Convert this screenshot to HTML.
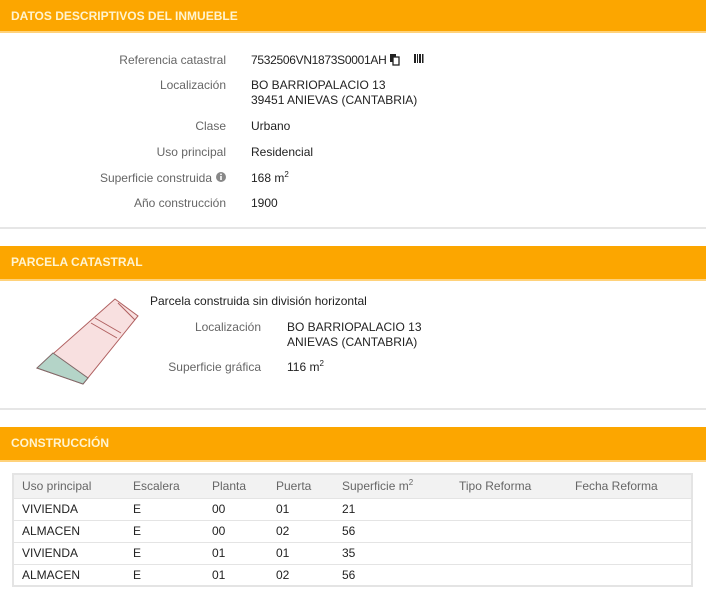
<!DOCTYPE html>
<html><head><meta charset="utf-8"><style>
*{margin:0;padding:0;box-sizing:border-box}
body{width:706px;height:600px;background:#fff;font-family:"Liberation Sans",sans-serif;font-size:12px;color:#222;position:relative;overflow:hidden}
.h{position:absolute;left:0;width:706px;background:#fca600;color:#fff4d0;font-weight:bold;font-size:12px;padding-left:11px;border-bottom:2px solid #ffd27a}
.a{position:absolute;white-space:nowrap}
.l{color:#666;text-align:right;width:226px;left:0}
.line{position:absolute;left:0;width:706px;height:2px;background:#e6e6e6}
table{position:absolute;left:12px;top:473px;width:681px;border-collapse:collapse;border:2px solid #e4e4e4}
td{height:22px;padding-left:8px;border-bottom:1px solid #e4e4e4;font-size:12px;color:#222}
tr.th td{background:#f2f2f2;color:#666;height:24px}
sup{font-size:8px;vertical-align:5px;line-height:0}
</style></head><body>
<div class="h" style="top:0;height:33px;line-height:32px">DATOS DESCRIPTIVOS DEL INMUEBLE</div>
<div class="a l" style="top:53px">Referencia catastral</div>
<div class="a" style="left:251px;top:53px;letter-spacing:-0.3px">7532506VN1873S0001AH</div>
<svg class="a" style="left:389px;top:53px" width="12" height="14"><rect x="1" y="1" width="6" height="8" fill="#222"/><rect x="4" y="4" width="6" height="8" fill="#fff" stroke="#222" stroke-width="1.3"/></svg>
<svg class="a" style="left:413px;top:53px" width="12" height="14"><g fill="#222"><rect x="1" y="1" width="2" height="9"/><rect x="4" y="1" width="1" height="9"/><rect x="6" y="1" width="2" height="9"/><rect x="9" y="1" width="1.5" height="9"/></g></svg>
<div class="a l" style="top:78px">Localización</div>
<div class="a" style="left:251px;top:78px;line-height:15px">BO BARRIOPALACIO 13<br>39451 ANIEVAS (CANTABRIA)</div>
<div class="a l" style="top:119px">Clase</div><div class="a" style="left:251px;top:119px">Urbano</div>
<div class="a l" style="top:145px">Uso principal</div><div class="a" style="left:251px;top:145px">Residencial</div>
<div class="a l" style="top:171px;width:212px">Superficie construida</div>
<svg class="a" style="left:215px;top:171px" width="12" height="14"><circle cx="6" cy="6" r="5" fill="#888"/><rect x="5.2" y="5" width="1.6" height="4" fill="#fff"/><rect x="5.2" y="2.6" width="1.6" height="1.5" fill="#fff"/></svg>
<div class="a" style="left:251px;top:171px">168 m<sup>2</sup></div>
<div class="a l" style="top:196px">Año construcción</div><div class="a" style="left:251px;top:196px">1900</div>
<div class="line" style="top:227px"></div>
<div class="h" style="top:246px;height:35px;line-height:33px">PARCELA CATASTRAL</div>
<svg class="a" style="left:0;top:0" width="160" height="400">
<polygon points="115,299 138,316 83,384 37,368" fill="#f8e0e0" stroke="#b06060" stroke-width="1"/>
<polygon points="53,353 88,378 83,384 37,368" fill="#b4d4c8" stroke="#806868" stroke-width="1"/>
<line x1="118" y1="303" x2="135" y2="320" stroke="#b06060"/>
<line x1="95" y1="318" x2="121" y2="333" stroke="#b06060"/>
<line x1="91" y1="323" x2="117" y2="338" stroke="#b06060"/>
</svg>
<div class="a" style="left:150px;top:294px">Parcela construida sin división horizontal</div>
<div class="a l" style="top:320px;width:261px">Localización</div>
<div class="a" style="left:287px;top:320px;line-height:15px">BO BARRIOPALACIO 13<br>ANIEVAS (CANTABRIA)</div>
<div class="a l" style="top:360px;width:261px">Superficie gráfica</div>
<div class="a" style="left:287px;top:360px">116 m<sup>2</sup></div>
<div class="line" style="top:408px"></div>
<div class="h" style="top:427px;height:35px;line-height:33px">CONSTRUCCIÓN</div>
<table>
<tr class="th"><td style="width:112px">Uso principal</td><td style="width:79px">Escalera</td><td style="width:64px">Planta</td><td style="width:66px">Puerta</td><td style="width:117px">Superficie m<sup>2</sup></td><td style="width:116px">Tipo Reforma</td><td>Fecha Reforma</td></tr>
<tr><td>VIVIENDA</td><td>E</td><td>00</td><td>01</td><td>21</td><td></td><td></td></tr>
<tr><td>ALMACEN</td><td>E</td><td>00</td><td>02</td><td>56</td><td></td><td></td></tr>
<tr><td>VIVIENDA</td><td>E</td><td>01</td><td>01</td><td>35</td><td></td><td></td></tr>
<tr><td>ALMACEN</td><td>E</td><td>01</td><td>02</td><td>56</td><td></td><td></td></tr>
</table>
</body></html>
